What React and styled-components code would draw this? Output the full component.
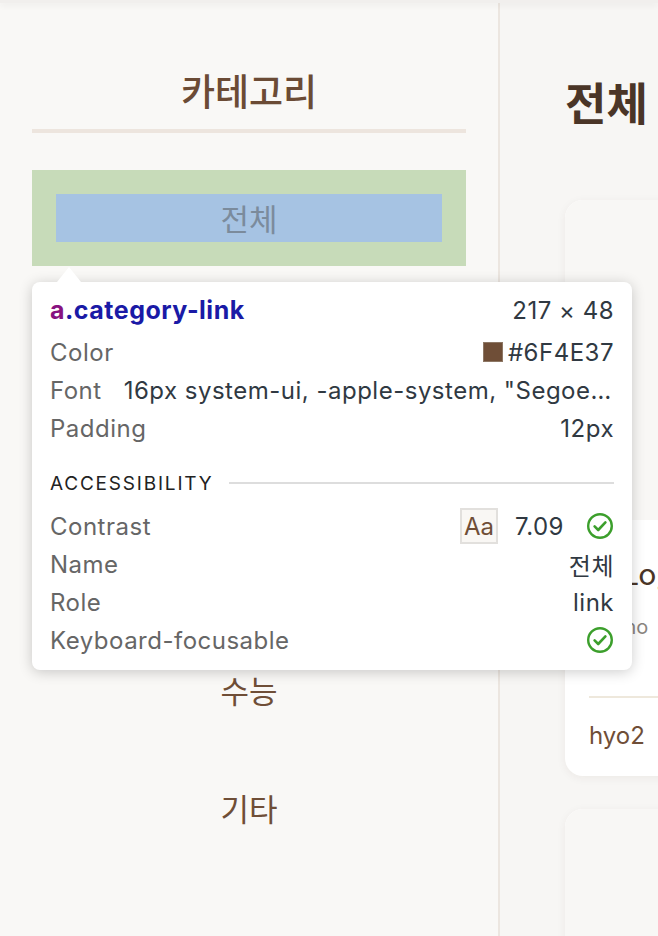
import styled, { createGlobalStyle } from 'styled-components';

const GlobalStyle = createGlobalStyle`
  html, body {
    margin: 0;
    padding: 0;
    background: #f7f6f4;
  }
  body {
    font-family: 'Noto Sans CJK KR', 'Noto Sans', sans-serif;
    overflow: hidden;
  }
`;

const Page = styled.div`
  position: relative;
  width: 658px;
  height: 936px;
  overflow: hidden;
  background: #f7f6f4;
`;

const TopBar = styled.div`
  height: 3px;
  background: #f1efed;
  box-shadow: 0 2px 6px rgba(0, 0, 0, 0.07);
  position: relative;
  z-index: 2;
`;

const Layout = styled.div`
  display: flex;
  height: 933px;
`;

const Sidebar = styled.aside`
  width: 434px;
  flex-shrink: 0;
  padding: 0 32px;
  background: #f9f8f6;
  border-right: 2px solid #ece6e0;
`;

const SidebarTitle = styled.h2`
  margin: 0;
  padding-top: 63px;
  font-size: 37px;
  line-height: 48px;
  font-weight: 500;
  text-align: center;
  color: #6b4b35;
  padding-bottom: 15px;
  border-bottom: 4px solid #ede5de;
`;

const CategoryList = styled.nav`
  display: flex;
  flex-direction: column;
  gap: 22px;
  margin-top: 37px;
`;

const CategoryLink = styled.a`
  display: block;
  height: 96px;
  padding: 24px;
  box-sizing: border-box;
  text-align: center;
  font-size: 31px;
  line-height: 48px;
  color: #6f4e37;
  text-decoration: none;
  background: ${(p) => (p.$inspected ? '#c7dbb9' : 'transparent')};

  span {
    display: block;
    height: 48px;
    background: ${(p) => (p.$inspected ? '#a6c3e3' : 'transparent')};
    color: ${(p) => (p.$inspected ? '#7b8b9c' : 'inherit')};
  }
`;

const Main = styled.main`
  flex: 1;
  padding: 0 0 0 65px;
  overflow: hidden;
`;

const MainTitle = styled.h1`
  margin: 0;
  padding-top: 70px;
  font-size: 45px;
  line-height: 58px;
  font-weight: 700;
  color: #4a3527;
  white-space: nowrap;
`;

const Cards = styled.div`
  display: flex;
  flex-direction: column;
  gap: 33px;
  margin-top: 69px;
  width: 560px;
`;

const Card = styled.article`
  border-radius: 18px;
  background: #fff;
  overflow: hidden;
  box-shadow: 0 2px 10px rgba(60, 40, 20, 0.06);
`;

const Thumb = styled.div`
  height: ${(p) => p.$h}px;
  background: #f8f7f5;
`;

const CardBody = styled.div`
  padding: 32px 24px 24px;
`;

const CardTitle = styled.h3`
  margin: 0;
  font-size: 30px;
  line-height: 40px;
  font-weight: 400;
  word-spacing: -1px;
  color: #4a3527;
  white-space: nowrap;
`;

const CardText = styled.p`
  margin: 18px 0 0;
  font-family: 'Inter', 'Noto Sans', 'Noto Sans CJK KR', sans-serif;
  font-size: 20px;
  line-height: 34px;
  color: #8a8580;
  white-space: nowrap;
`;

const Divider = styled.hr`
  border: none;
  border-top: 2px solid #eee8dc;
  margin: 52px 0 0;
`;

const Author = styled.div`
  margin-top: 22px;
  font-family: 'Inter', 'Noto Sans', sans-serif;
  font-size: 24px;
  line-height: 32px;
  color: #6f4e37;
`;

/* devtools inspect overlay */
const Tooltip = styled.div`
  position: absolute;
  left: 32px;
  top: 282px;
  width: 600px;
  height: 388px;
  box-sizing: border-box;
  padding: 14px 18px 0;
  background: #fff;
  border-radius: 8px;
  box-shadow: 0 2px 14px rgba(0, 0, 0, 0.2);
  font-family: 'Inter', 'Noto Sans', 'Noto Sans CJK KR', sans-serif;
  letter-spacing: 0.5px;
  z-index: 5;

  &::before {
    content: '';
    position: absolute;
    top: -15px;
    left: 25px;
    border-left: 12px solid transparent;
    border-right: 12px solid transparent;
    border-bottom: 15px solid #fff;
  }
`;

const TipHead = styled.div`
  display: flex;
  justify-content: space-between;
  align-items: center;
  height: 28px;
  margin-bottom: 9px;
`;

const Selector = styled.span`
  font-size: 25px;
  font-weight: 700;
  color: #1a1aa6;

  b {
    color: #881280;
    font-weight: 700;
  }
`;

const Size = styled.span`
  font-size: 24px;
  color: #303942;
`;

const Row = styled.div`
  display: flex;
  justify-content: space-between;
  align-items: center;
  height: 38px;
  font-size: 24px;
  gap: 22px;
`;

const Label = styled.span`
  color: #666;
  white-space: nowrap;
`;

const Value = styled.span`
  display: flex;
  align-items: center;
  gap: 5px;
  color: #303942;
  white-space: nowrap;
`;

const FontValue = styled.span`
  color: #303942;
  white-space: nowrap;
  overflow: hidden;
  text-overflow: ellipsis;
  min-width: 0;
`;

const Swatch = styled.i`
  display: inline-block;
  width: 18px;
  height: 18px;
  background: #6f4e37;
  border: 1px solid #8d7765;
`;

const Section = styled.div`
  display: flex;
  align-items: center;
  gap: 16px;
  height: 20px;
  margin: 26px 0 14px;
  font-size: 19px;
  letter-spacing: 1.8px;
  color: #222;

  &::after {
    content: '';
    flex: 1;
    border-top: 2px solid #ddd;
  }
`;

const AaBox = styled.span`
  display: inline-flex;
  align-items: center;
  justify-content: center;
  width: 38px;
  height: 36px;
  box-sizing: border-box;
  border: 2px solid #e2e0dd;
  background: #f9f7f4;
  color: #6f4e37;
  font-size: 24px;
  letter-spacing: 0;
  margin-right: 12px;
`;

const Spacer = styled.span`
  width: 12px;
`;

const Check = () => (
  <svg width="28" height="28" viewBox="0 0 28 28" fill="none">
    <circle cx="14" cy="14" r="11.8" stroke="#3c9f2c" strokeWidth="2.4" />
    <path d="M8.6 14.4l3.6 3.6 7.2-7.6" stroke="#3c9f2c" strokeWidth="2.6" strokeLinecap="round" strokeLinejoin="round" />
  </svg>
);

const categories = ['전체', '내신', '모의고사', '입시', '수능', '기타'];

export default function App() {
  return (
    <Page>
      <GlobalStyle />
      <TopBar />
      <Layout>
        <Sidebar>
          <SidebarTitle>카테고리</SidebarTitle>
          <CategoryList>
            {categories.map((c, i) => (
              <CategoryLink key={c} className="category-link" href="#" $inspected={i === 0}>
                <span>{c}</span>
              </CategoryLink>
            ))}
          </CategoryList>
        </Sidebar>
        <Main>
          <MainTitle>전체</MainTitle>
          <Cards>
            <Card>
              <Thumb $h={320} />
              <CardBody>
                <CardTitle>첫 Log</CardTitle>
                <CardText>Memo</CardText>
                <Divider />
                <Author>hyo2</Author>
              </CardBody>
            </Card>
            <Card>
              <Thumb $h={320} />
            </Card>
          </Cards>
        </Main>
      </Layout>

      <Tooltip>
        <TipHead>
          <Selector>
            <b>a</b>.category-link
          </Selector>
          <Size>217 × 48</Size>
        </TipHead>
        <Row>
          <Label>Color</Label>
          <Value>
            <Swatch />
            #6F4E37
          </Value>
        </Row>
        <Row>
          <Label>Font</Label>
          <FontValue>16px system-ui, -apple-system, "Segoe UI", Roboto, sans-serif</FontValue>
        </Row>
        <Row>
          <Label>Padding</Label>
          <Value>12px</Value>
        </Row>
        <Section>ACCESSIBILITY</Section>
        <Row>
          <Label>Contrast</Label>
          <Value>
            <AaBox>Aa</AaBox>
            7.09
            <Spacer />
            <Check />
          </Value>
        </Row>
        <Row>
          <Label>Name</Label>
          <Value>전체</Value>
        </Row>
        <Row>
          <Label>Role</Label>
          <Value>link</Value>
        </Row>
        <Row>
          <Label>Keyboard-focusable</Label>
          <Value>
            <Check />
          </Value>
        </Row>
      </Tooltip>
    </Page>
  );
}
